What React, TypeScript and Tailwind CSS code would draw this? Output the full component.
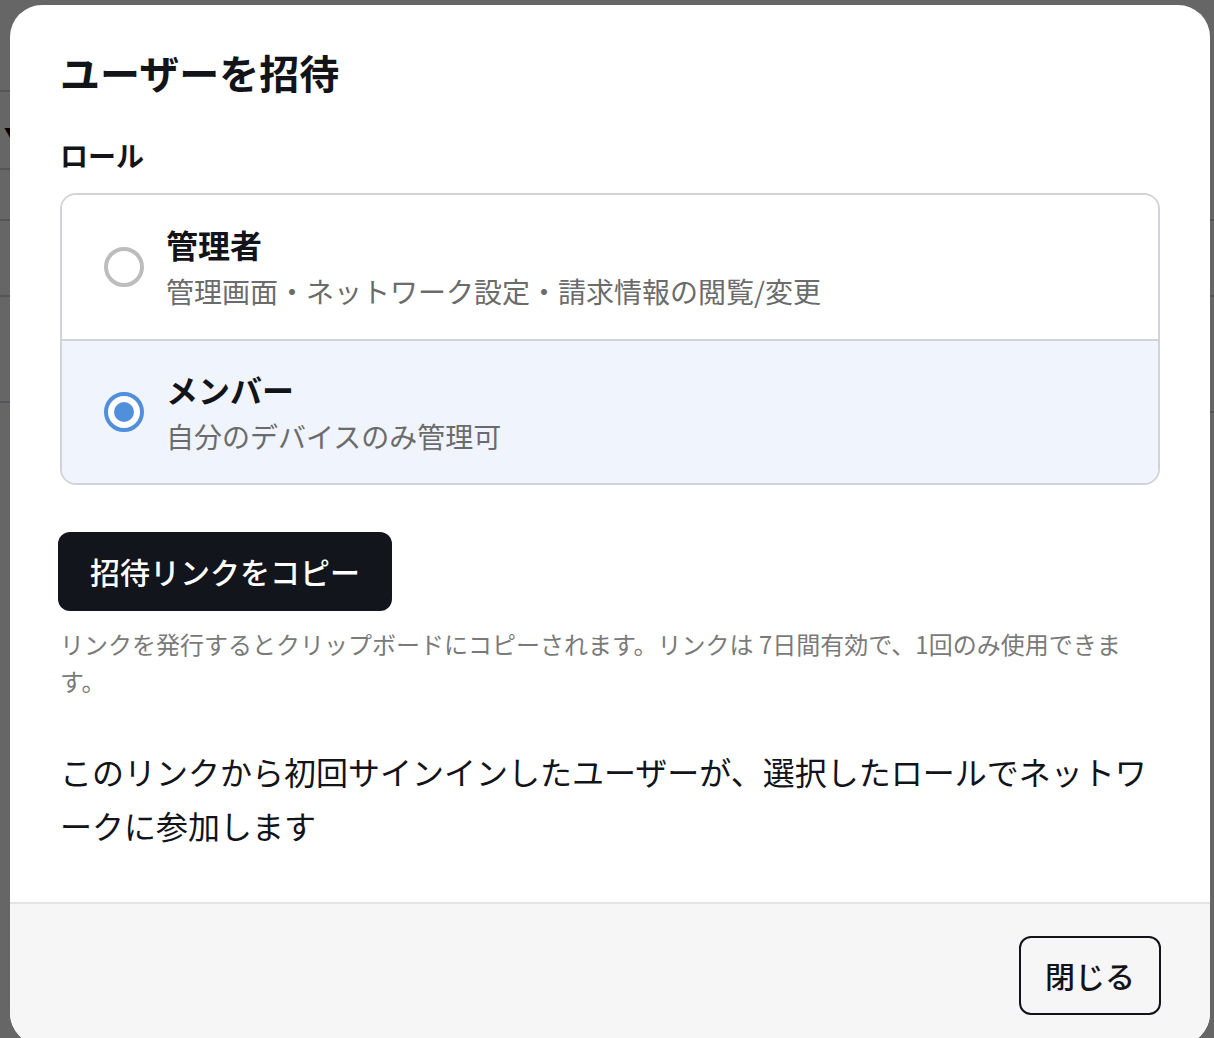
import React, { useState } from 'react';

type Role = 'admin' | 'member';

const ROLES: { id: Role; label: string; desc: string }[] = [
  { id: 'admin', label: '管理者', desc: '管理画面・ネットワーク設定・請求情報の閲覧/変更' },
  { id: 'member', label: 'メンバー', desc: '自分のデバイスのみ管理可' },
];

const FONT = { fontFamily: '"Noto Sans CJK JP", "Noto Sans", "Liberation Sans", sans-serif' };

const Radio: React.FC<{ checked: boolean }> = ({ checked }) => (
  <span
    className={`flex h-[40px] w-[40px] shrink-0 items-center justify-center rounded-full border-[4px] bg-white ${
      checked ? 'border-[#4f8fdb]' : 'border-[#bdbdbd]'
    }`}
  >
    {checked && <span className="h-[20px] w-[20px] rounded-full bg-[#4f8fdb]" />}
  </span>
);

// page behind the dialog, only its edges show
const BackgroundPage = () => (
  <div className="flex h-screen w-full bg-white">
    <div className="flex w-1/2 flex-col">
      <div className="h-[92px] border-b-[2px] border-gray-300" />
      <div className="flex h-[78px] items-center border-b-[2px] border-gray-300 pl-1 pt-1 text-[14px] text-black">▼</div>
      <div className="h-[51px] border-b-[2px] border-gray-300" />
      <div className="h-[76px] border-b-[2px] border-gray-300" />
      <div className="h-[106px] border-b-[2px] border-gray-300" />
    </div>
    <div className="flex w-1/2 flex-col">
      <div className="h-[221px] border-b-[2px] border-gray-300" />
      <div className="h-[76px] border-b-[2px] border-gray-300" />
      <div className="h-[116px] border-b-[2px] border-gray-300" />
    </div>
  </div>
);

const App: React.FC = () => {
  const [role, setRole] = useState<Role>('member');

  return (
    <div className="relative h-screen w-full overflow-hidden" style={FONT}>
      <BackgroundPage />

      <div className="absolute inset-0 bg-black/60 pl-[10px] pr-[4px] pt-[5px]">
        <div className="flex h-[1040px] w-full flex-col overflow-hidden rounded-[32px] bg-white">
          <div className="flex flex-1 flex-col px-[50px] pt-[39px]">
            <h2 className="text-[40px] font-bold leading-[56px] text-[#12141a]">ユーザーを招待</h2>

            <div className="mt-[34px] text-[28px] font-bold leading-[42px] text-[#12141a]">ロール</div>

            <div className="mt-[17px] overflow-hidden rounded-[16px] border-[2px] border-[#d2d3d8]">
              {ROLES.map((r, i) => (
                <button
                  key={r.id}
                  type="button"
                  onClick={() => setRole(r.id)}
                  className={`flex h-[144px] w-full items-center gap-[22px] pl-[42px] text-left ${
                    i > 0 ? 'border-t-[2px] border-[#d2d3d8]' : ''
                  } ${role === r.id ? 'bg-[#f0f4fc]' : 'bg-white'}`}
                >
                  <Radio checked={role === r.id} />
                  <div className="flex flex-col">
                    <span className="text-[32px] font-bold leading-[48px] text-[#12141a]">{r.label}</span>
                    <span className="text-[28px] leading-[46px] text-[#6b6b6b]">{r.desc}</span>
                  </div>
                </button>
              ))}
            </div>

            <div className="-ml-[2px] mt-[47px]">
              <button
                type="button"
                className="h-[79px] rounded-[12px] bg-[#12151c] px-[32px] text-[30px] font-medium text-white"
              >
                招待リンクをコピー
              </button>
            </div>

            <p className="mt-[14px] text-[24px] leading-[37px] text-[#7a7a7a]">
              リンクを発行するとクリップボードにコピーされます。リンクは 7日間有効で、1回のみ使用できます。
            </p>

            <p className="mt-[45px] text-[32px] leading-[54px] text-[#12141a]">
              このリンクから初回サインインしたユーザーが、選択したロールでネットワークに参加します
            </p>
          </div>

          <div className="flex h-[143px] items-start justify-end border-t-[2px] border-[#e3e3e5] bg-[#f6f6f7] px-[49px] pt-[32px]">
            <button
              type="button"
              className="h-[79px] rounded-[12px] border-[2px] border-[#12141a] px-[24px] text-[30px] font-medium text-[#12141a]"
            >
              閉じる
            </button>
          </div>
        </div>
      </div>
    </div>
  );
};

export default App;
